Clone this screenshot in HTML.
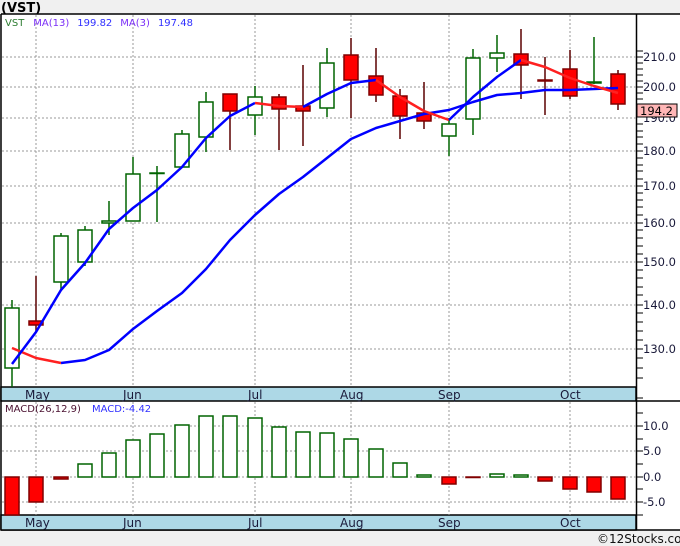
<!DOCTYPE html>
<html><head><meta charset="utf-8"><style>
html,body{margin:0;padding:0;background:#f0f0f0;}
svg{display:block;font-family:"DejaVu Sans","Liberation Sans",sans-serif;}
</style></head><body>
<svg width="680" height="546" viewBox="0 0 680 546" xmlns="http://www.w3.org/2000/svg">
<rect x="0" y="0" width="680" height="546" fill="#f0f0f0"/>
<text x="1" y="12" font-size="13" font-weight="bold" fill="#000">(VST)</text>
<rect x="1" y="14" width="679" height="516" fill="#fff"/>
<g stroke="#000" stroke-width="1.5" fill="none">
<line x1="1" y1="14" x2="680" y2="14"/><line x1="1" y1="14" x2="1" y2="530"/>
<line x1="636.5" y1="14" x2="636.5" y2="530"/><line x1="1" y1="530" x2="680" y2="530"/>
</g>
<rect x="1" y="387" width="635" height="14" fill="#add8e6" stroke="#000" stroke-width="1.5"/>
<rect x="1" y="515" width="635" height="15" fill="#add8e6" stroke="#000" stroke-width="1.5"/>
<line x1="636" y1="401" x2="680" y2="401" stroke="#000" stroke-width="1.5"/>
<g font-size="12" fill="#1a1a3a">
<text x="25" y="399">May</text><text x="123" y="399">Jun</text><text x="248" y="399">Jul</text><text x="340" y="399">Aug</text><text x="438" y="399">Sep</text><text x="560" y="399">Oct</text>
<text x="25" y="527">May</text><text x="123" y="527">Jun</text><text x="248" y="527">Jul</text><text x="340" y="527">Aug</text><text x="438" y="527">Sep</text><text x="560" y="527">Oct</text>
</g>
<g stroke="#999" stroke-dasharray="2,2" stroke-width="1">
<line x1="2" y1="57" x2="636" y2="57"/><line x1="2" y1="87" x2="636" y2="87"/><line x1="2" y1="118" x2="636" y2="118"/><line x1="2" y1="151" x2="636" y2="151"/><line x1="2" y1="186" x2="636" y2="186"/><line x1="2" y1="223" x2="636" y2="223"/><line x1="2" y1="262" x2="636" y2="262"/><line x1="2" y1="305" x2="636" y2="305"/><line x1="2" y1="349" x2="636" y2="349"/>
<line x1="36" y1="15" x2="36" y2="387"/><line x1="133" y1="15" x2="133" y2="387"/><line x1="255" y1="15" x2="255" y2="387"/><line x1="351" y1="15" x2="351" y2="387"/><line x1="449" y1="15" x2="449" y2="387"/><line x1="570" y1="15" x2="570" y2="387"/>
<line x1="2" y1="426" x2="636" y2="426"/><line x1="2" y1="451" x2="636" y2="451"/><line x1="2" y1="477" x2="636" y2="477"/><line x1="2" y1="502" x2="636" y2="502"/>
<line x1="36" y1="402" x2="36" y2="515"/><line x1="133" y1="402" x2="133" y2="515"/><line x1="255" y1="402" x2="255" y2="515"/><line x1="351" y1="402" x2="351" y2="515"/><line x1="449" y1="402" x2="449" y2="515"/><line x1="570" y1="402" x2="570" y2="515"/>
</g>
<g stroke="#000" stroke-width="1">
<line x1="637" y1="51" x2="643" y2="51"/><line x1="637" y1="57" x2="643" y2="57"/><line x1="637" y1="63" x2="643" y2="63"/><line x1="637" y1="69" x2="643" y2="69"/><line x1="637" y1="75" x2="643" y2="75"/><line x1="637" y1="81" x2="643" y2="81"/><line x1="637" y1="87" x2="643" y2="87"/><line x1="637" y1="93" x2="643" y2="93"/><line x1="637" y1="99" x2="643" y2="99"/><line x1="637" y1="124" x2="643" y2="124"/><line x1="637" y1="131" x2="643" y2="131"/><line x1="637" y1="137" x2="643" y2="137"/><line x1="637" y1="144" x2="643" y2="144"/><line x1="637" y1="151" x2="643" y2="151"/><line x1="637" y1="158" x2="643" y2="158"/><line x1="637" y1="165" x2="643" y2="165"/><line x1="637" y1="171" x2="643" y2="171"/><line x1="637" y1="179" x2="643" y2="179"/><line x1="637" y1="186" x2="643" y2="186"/><line x1="637" y1="193" x2="643" y2="193"/><line x1="637" y1="200" x2="643" y2="200"/><line x1="637" y1="207" x2="643" y2="207"/><line x1="637" y1="215" x2="643" y2="215"/><line x1="637" y1="223" x2="643" y2="223"/><line x1="637" y1="230" x2="643" y2="230"/><line x1="637" y1="238" x2="643" y2="238"/><line x1="637" y1="246" x2="643" y2="246"/><line x1="637" y1="254" x2="643" y2="254"/><line x1="637" y1="262" x2="643" y2="262"/><line x1="637" y1="270" x2="643" y2="270"/><line x1="637" y1="278" x2="643" y2="278"/><line x1="637" y1="287" x2="643" y2="287"/><line x1="637" y1="295" x2="643" y2="295"/><line x1="637" y1="305" x2="643" y2="305"/><line x1="637" y1="313" x2="643" y2="313"/><line x1="637" y1="322" x2="643" y2="322"/><line x1="637" y1="331" x2="643" y2="331"/><line x1="637" y1="340" x2="643" y2="340"/><line x1="637" y1="349" x2="643" y2="349"/><line x1="637" y1="358" x2="643" y2="358"/><line x1="637" y1="368" x2="643" y2="368"/><line x1="637" y1="378" x2="643" y2="378"/><line x1="637" y1="398" x2="643" y2="398"/>
<line x1="637" y1="413" x2="643" y2="413"/><line x1="637" y1="426" x2="643" y2="426"/><line x1="637" y1="439" x2="643" y2="439"/><line x1="637" y1="451" x2="643" y2="451"/><line x1="637" y1="464" x2="643" y2="464"/><line x1="637" y1="477" x2="643" y2="477"/><line x1="637" y1="489" x2="643" y2="489"/><line x1="637" y1="502" x2="643" y2="502"/><line x1="637" y1="515" x2="643" y2="515"/>
</g>
<g font-size="11.5" fill="#1a1a3a">
<text x="643" y="61">210.0</text><text x="643" y="91">200.0</text><text x="643" y="122">190.0</text><text x="643" y="155">180.0</text><text x="643" y="190">170.0</text><text x="643" y="227">160.0</text><text x="643" y="266">150.0</text><text x="643" y="309">140.0</text><text x="643" y="353">130.0</text>
<text x="643" y="430">10.0</text><text x="643" y="455">5.0</text><text x="643" y="481">0.0</text><text x="643" y="506">-5.0</text>
</g>
<rect x="637" y="104" width="40" height="13" fill="#ffb6b6" stroke="#000" stroke-width="1"/>
<text x="640" y="115" font-size="11.5" fill="#000">194.2</text>
<text x="5" y="26" font-size="10"><tspan fill="#2e7d32">VST</tspan><tspan fill="#7b2ff7" dx="9">MA(13)</tspan><tspan fill="#3030ff" dx="8">199.82</tspan><tspan fill="#7b2ff7" dx="8">MA(3)</tspan><tspan fill="#3030ff" dx="8">197.48</tspan></text>
<text x="5" y="412" font-size="10"><tspan fill="#4a1030">MACD(26,12,9)</tspan><tspan fill="#3030ff" dx="11">MACD:-4.42</tspan></text>
<g stroke-width="1.5">
<g stroke="#006400">
<line x1="12" y1="300" x2="12" y2="387"/><line x1="61" y1="233" x2="61" y2="291"/><line x1="85" y1="226" x2="85" y2="266"/><line x1="109" y1="201" x2="109" y2="235"/><line x1="133" y1="157" x2="133" y2="221"/><line x1="157" y1="166" x2="157" y2="222"/><line x1="182" y1="130" x2="182" y2="167"/><line x1="206" y1="92" x2="206" y2="152"/><line x1="255" y1="86" x2="255" y2="135"/><line x1="327" y1="48" x2="327" y2="117"/><line x1="449" y1="118" x2="449" y2="156"/><line x1="473" y1="49" x2="473" y2="135"/><line x1="497" y1="35" x2="497" y2="72"/><line x1="594" y1="37" x2="594" y2="84"/>
</g>
<g stroke="#5a0000">
<line x1="36" y1="276" x2="36" y2="332"/><line x1="230" y1="94" x2="230" y2="150"/><line x1="279" y1="94" x2="279" y2="150"/><line x1="303" y1="65" x2="303" y2="146"/><line x1="351" y1="38" x2="351" y2="118"/><line x1="376" y1="48" x2="376" y2="102"/><line x1="400" y1="89" x2="400" y2="139"/><line x1="424" y1="82" x2="424" y2="129"/><line x1="521" y1="29" x2="521" y2="99"/><line x1="545" y1="57" x2="545" y2="115"/><line x1="570" y1="50" x2="570" y2="99"/><line x1="618" y1="70" x2="618" y2="110"/>
</g>
</g>
<g fill="#fff" stroke="#006400" stroke-width="1.5">
<rect x="5" y="308" width="14" height="60"/><rect x="54" y="236" width="14" height="46"/><rect x="78" y="230" width="14" height="32"/><rect x="102" y="221" width="14" height="2"/><rect x="126" y="174" width="14" height="47"/><rect x="150" y="173" width="14" height="0.5"/><rect x="175" y="134" width="14" height="33"/><rect x="199" y="102" width="14" height="35"/><rect x="248" y="97" width="14" height="18"/><rect x="320" y="63" width="14" height="45"/><rect x="442" y="124" width="14" height="12"/><rect x="466" y="58" width="14" height="61"/><rect x="490" y="53" width="14" height="5"/><rect x="587" y="82" width="14" height="1"/>
</g>
<g fill="#ff0000" stroke="#800000" stroke-width="1.5">
<rect x="29" y="321" width="14" height="4"/><rect x="223" y="94" width="14" height="17"/><rect x="272" y="97" width="14" height="12"/><rect x="296" y="106" width="14" height="5"/><rect x="344" y="55" width="14" height="25"/><rect x="369" y="76" width="14" height="19"/><rect x="393" y="96" width="14" height="20"/><rect x="417" y="113" width="14" height="8"/><rect x="514" y="54" width="14" height="11"/><rect x="538" y="80" width="14" height="1"/><rect x="563" y="69" width="14" height="27"/><rect x="611" y="74" width="14" height="30"/>
</g>
<g fill="none" stroke-width="2.5" stroke-linejoin="round">
<polyline stroke="#ff2020" points="12,348 36,358 61,363"/>
<polyline stroke="#0000ff" points="61,363 85,360 109,350 133,329 157,311 182,293 206,269 230,240 255,215 279,194 303,177 327,158 351,139 376,128 400,121 424,114 449,110 473,102 497,95 521,93 545,90 570,90 594,89 618,88"/>
<polyline stroke="#0000ff" points="12,364 36,332 61,290 85,263 109,229 133,208 157,190 182,167 206,138 230,116 255,103"/>
<polyline stroke="#ff2020" points="255,103 279,106 303,107"/>
<polyline stroke="#0000ff" points="303,107 327,94 351,83 376,80"/>
<polyline stroke="#ff2020" points="376,80 400,97 424,111 449,120"/>
<polyline stroke="#0000ff" points="449,120 473,97 497,77 521,60"/>
<polyline stroke="#ff2020" points="521,60 545,67 570,78 594,86 618,93"/>
</g>
<g fill="#ff0000" stroke="#800000" stroke-width="1.5">
<rect x="5" y="477" width="14" height="38"/><rect x="29" y="477" width="14" height="25"/><rect x="54" y="477" width="14" height="2"/><rect x="442" y="477" width="14" height="7"/><rect x="466" y="477" width="14" height="0.5"/><rect x="538" y="477" width="14" height="4"/><rect x="563" y="477" width="14" height="12"/><rect x="587" y="477" width="14" height="15"/><rect x="611" y="477" width="14" height="22"/>
</g>
<g fill="#fff" stroke="#006400" stroke-width="1.5">
<rect x="78" y="464" width="14" height="13"/><rect x="102" y="453" width="14" height="24"/><rect x="126" y="440" width="14" height="37"/><rect x="150" y="434" width="14" height="43"/><rect x="175" y="425" width="14" height="52"/><rect x="199" y="416" width="14" height="61"/><rect x="223" y="416" width="14" height="61"/><rect x="248" y="418" width="14" height="59"/><rect x="272" y="427" width="14" height="50"/><rect x="296" y="432" width="14" height="45"/><rect x="320" y="433" width="14" height="44"/><rect x="344" y="439" width="14" height="38"/><rect x="369" y="449" width="14" height="28"/><rect x="393" y="463" width="14" height="14"/><rect x="417" y="475" width="14" height="2"/><rect x="490" y="474" width="14" height="3"/><rect x="514" y="475" width="14" height="2"/>
</g>
<text x="597" y="543" font-size="12" fill="#111">©12Stocks.com</text>
</svg>
</body></html>
